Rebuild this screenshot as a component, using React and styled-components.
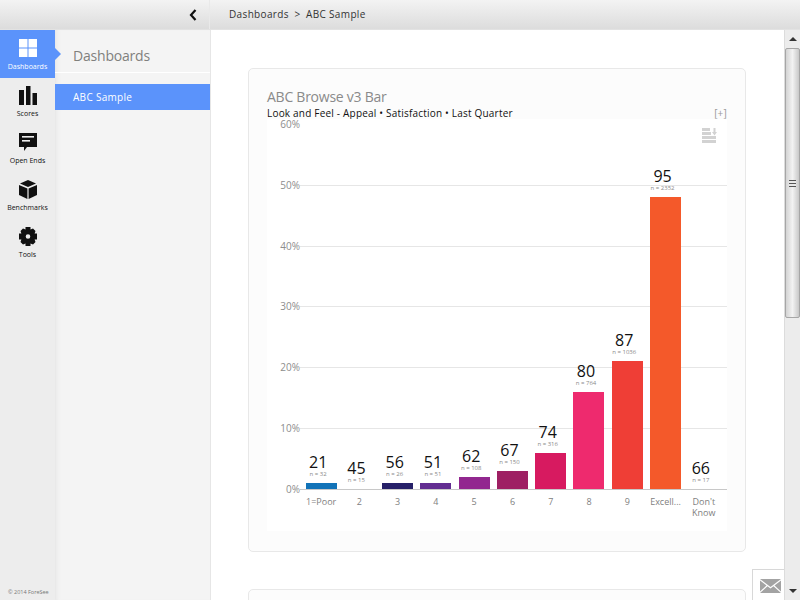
import React from 'react';
import styled, { createGlobalStyle } from 'styled-components';

const GlobalStyle = createGlobalStyle`
  html, body {
    margin: 0;
    padding: 0;
    height: 100%;
    overflow: hidden;
    background: #ffffff;
    font-family: "Open Sans", "Liberation Sans", sans-serif;
  }
  #root { height: 100%; }
`;

const Page = styled.div`
  width: 800px;
  height: 600px;
  display: flex;
  flex-direction: column;
  overflow: hidden;
`;

const TopBar = styled.header`
  height: 29px;
  flex: none;
  display: flex;
  background: linear-gradient(#f3f3f3, #dcdcdc);
  border-bottom: 1px solid #e2e2e2;
`;

const TopLeft = styled.div`
  width: 210px;
  display: flex;
  align-items: center;
  justify-content: flex-end;
  padding-right: 12px;
  box-sizing: border-box;
  border-right: 1px solid #e9e9e9;
`;

const Crumbs = styled.div`
  margin-left: 19px;
  font-size: 10px;
  letter-spacing: 0.35px;
  line-height: 29px;
  color: #333333;
`;

const CrumbSep = styled.span`
  margin: 0 5.5px;
`;

const Body = styled.div`
  flex: 1;
  display: flex;
  min-height: 0;
`;

const Rail = styled.nav`
  width: 55px;
  flex: none;
  display: flex;
  flex-direction: column;
  background: #ededed;
  position: relative;
`;

const RailItem = styled.div`
  height: ${({ $active }) => ($active ? 48 : 47)}px;
  display: flex;
  flex-direction: column;
  align-items: center;
  padding-top: ${({ $active }) => ($active ? 9 : 8)}px;
  box-sizing: border-box;
  position: relative;
  font-size: 7px;
  line-height: 10px;
  color: ${({ $active }) => ($active ? '#ffffff' : '#111111')};
  background: ${({ $active }) => ($active ? '#5b93fb' : 'transparent')};

  svg {
    display: block;
    margin-bottom: ${({ $active }) => ($active ? 5 : 4)}px;
  }

  ${({ $active }) => $active && `
    &::after {
      content: "";
      position: absolute;
      left: 55px;
      top: 18px;
      border-left: 6px solid #5b93fb;
      border-top: 6px solid transparent;
      border-bottom: 6px solid transparent;
    }
  `}
`;

const Copyright = styled.div`
  position: absolute;
  left: 8px;
  bottom: 4px;
  font-size: 5.5px;
  line-height: 8px;
  color: #777777;
`;

const Panel = styled.aside`
  width: 155px;
  flex: none;
  background: #f4f4f4;
  border-right: 1px solid #e6e6e6;
  box-shadow: inset 5px 0 5px -4px #e2e2e2;
`;

const PanelTitle = styled.div`
  height: 43px;
  box-sizing: border-box;
  padding-left: 18px;
  font-size: 14px;
  letter-spacing: -0.2px;
  line-height: 51px;
  color: #80807d;
  border-bottom: 1px solid #ffffff;
`;

const PanelLink = styled.div`
  margin-top: 11px;
  height: 26px;
  padding-left: 18px;
  font-size: 10px;
  letter-spacing: 0.3px;
  line-height: 27px;
  color: #ffffff;
  background: #5b93fb;
`;

const Main = styled.main`
  flex: 1;
  min-width: 0;
  display: flex;
  flex-direction: column;
  gap: 37px;
  padding: 38px 38px 0 37px;
  overflow: hidden;
  position: relative;
`;

const Card = styled.section`
  flex: none;
  height: ${({ $height }) => $height}px;
  box-sizing: border-box;
  padding: 19px 18px 0;
  background: #fcfcfc;
  border: 1px solid #e8e8e8;
  border-radius: 5px;
`;

const CardTitle = styled.h2`
  margin: 0;
  font-size: 14px;
  font-weight: 400;
  letter-spacing: -0.25px;
  line-height: 18px;
  color: #8a8a8a;
`;

const SubRow = styled.div`
  display: flex;
  justify-content: space-between;
  align-items: center;
  height: 13px;
  font-size: 10px;
  letter-spacing: 0.2px;
  color: #111111;
`;

const Expand = styled.span`
  font-size: 10px;
  color: #9a9a9a;
`;

const Chart = styled.div`
  height: 412px;
  background: #ffffff;
  position: relative;
  display: flex;
  flex-direction: column;
`;

const MenuIcon = styled.svg`
  position: absolute;
  top: 9px;
  right: 10px;
`;

const Plot = styled.div`
  margin: 5px 0 0 33px;
  padding: 0 4px 0 2px;
  height: 365px;
  position: relative;
  display: flex;
  align-items: flex-end;
  border-bottom: 1px solid #c8c8c8;
`;

const Grid = styled.div`
  position: absolute;
  inset: 0 0 -1px 0;
  display: flex;
  flex-direction: column;
  justify-content: space-between;
`;

const GridLine = styled.div`
  height: 1px;
  position: relative;
  background: ${({ $hidden }) => ($hidden ? 'transparent' : '#e6e6e6')};
`;

const TickLabel = styled.span`
  position: absolute;
  right: 100%;
  top: -6px;
  font-size: 10px;
  line-height: 12px;
  color: #8d8d8d;
`;

const Column = styled.div`
  flex: 1;
  min-width: 0;
  display: flex;
  flex-direction: column;
  align-items: center;
  position: relative;
`;

const Score = styled.div`
  padding-right: 6px;
  font-size: 16px;
  line-height: 17px;
  color: #111111;
`;

const Count = styled.div`
  padding-right: 6px;
  font-size: 6px;
  line-height: 7px;
  margin-bottom: 5px;
  white-space: nowrap;
  color: #8a8a8a;
`;

const Bar = styled.div`
  width: 31px;
  background: ${({ $color }) => $color};
`;

const Labels = styled.div`
  margin-left: 33px;
  padding: 6px 4px 0 2px;
  display: flex;
`;

const AxisLabel = styled.div`
  flex: 1;
  min-width: 0;
  text-align: center;
  font-size: 9px;
  line-height: 11px;
  color: #808080;
`;

const Scrollbar = styled.div`
  width: 16px;
  flex: none;
  display: flex;
  flex-direction: column;
  align-items: stretch;
  background: #ececec;
  border-left: 1px solid #dcdcdc;
  box-sizing: border-box;
`;

const ScrollArrow = styled.div`
  height: 18px;
  flex: none;
  display: flex;
  align-items: center;
  justify-content: center;
  ${({ $down }) => $down && 'margin-top: auto;'}

  &::before {
    content: "";
    border-left: 4px solid transparent;
    border-right: 4px solid transparent;
    ${({ $down }) => ($down ? 'border-top: 4px solid #333333;' : 'border-bottom: 4px solid #333333;')}
  }
`;

const ScrollThumb = styled.div`
  height: 270px;
  box-sizing: border-box;
  border: 1px solid #a6a6a6;
  border-radius: 2px;
  background: linear-gradient(to right, #d4d4d4, #f2f2f2 50%, #c8c8c8);
  display: flex;
  align-items: center;
  justify-content: center;
`;

const Grip = styled.div`
  width: 7px;
  height: 7px;
  background: repeating-linear-gradient(#555555 0 1px, #e8e8e8 1px 3px);
`;

const MailButton = styled.button`
  position: absolute;
  right: -4px;
  bottom: -2px;
  width: 36px;
  height: 33px;
  padding: 0;
  display: flex;
  align-items: center;
  justify-content: center;
  background: #ffffff;
  border: 1px solid #d8d8d8;
`;

const data = [
  { label: '1=Poor', score: 21, n: 32, pct: 1, color: '#1273b8' },
  { label: '2', score: 45, n: 15, pct: 0, color: '#1f2a6b' },
  { label: '3', score: 56, n: 26, pct: 1, color: '#262068' },
  { label: '4', score: 51, n: 51, pct: 1, color: '#622d91' },
  { label: '5', score: 62, n: 108, pct: 2, color: '#92278f' },
  { label: '6', score: 67, n: 150, pct: 3, color: '#9e1f63' },
  { label: '7', score: 74, n: 316, pct: 6, color: '#d71a60' },
  { label: '8', score: 80, n: 764, pct: 16, color: '#ee2a6e' },
  { label: '9', score: 87, n: 1036, pct: 21, color: '#ef3e36' },
  { label: 'Excell...', score: 95, n: 2352, pct: 48, color: '#f4592a' },
  { label: "Don't Know", score: 66, n: 17, pct: 0, color: '#f4592a' },
];

const ticks = [60, 50, 40, 30, 20, 10, 0];

function DashboardsIcon() {
  return (
    <svg width="18" height="18" viewBox="0 0 18 18" fill="#ffffff">
      <rect width="8.5" height="8.5" />
      <rect x="9.5" width="8.5" height="8.5" />
      <rect y="9.5" width="8.5" height="8.5" />
      <rect x="9.5" y="9.5" width="8.5" height="8.5" />
    </svg>
  );
}

function ScoresIcon() {
  return (
    <svg width="18" height="19" viewBox="0 0 18 19" fill="#111111">
      <rect y="4" width="5" height="15" />
      <rect x="7" width="4.5" height="19" />
      <rect x="13.5" y="7" width="4.5" height="12" />
    </svg>
  );
}

function OpenEndsIcon() {
  return (
    <svg width="18" height="19" viewBox="0 0 18 19">
      <path d="M0 0H18V14H8L5 18V14H0Z" fill="#111111" />
      <rect x="3" y="3" width="12" height="1.6" fill="#eeeeee" />
      <rect x="3" y="7" width="8" height="1.6" fill="#eeeeee" />
    </svg>
  );
}

function BenchmarksIcon() {
  return (
    <svg width="18" height="19" viewBox="0 0 18 19" fill="#111111">
      <path d="M9 0L17 3.5L9 7L1 3.5Z" />
      <path d="M0 5L8.4 8.6V19L0 15Z" />
      <path d="M18 5L9.6 8.6V19L18 15Z" />
    </svg>
  );
}

function ToolsIcon() {
  return (
    <svg width="18" height="19" viewBox="0 0 18 19" fill="#111111">
      <path
        fillRule="evenodd"
        d="M6.5 0H11.5V2.4L14 1.6L16.5 4L15.6 6.5H18V12.5H15.6L16.5 15L14 17.4L11.5 16.6V19H6.5V16.6L4 17.4L1.5 15L2.4 12.5H0V6.5H2.4L1.5 4L4 1.6L6.5 2.4ZM9 7.2A2.3 2.3 0 1 0 9 11.8A2.3 2.3 0 1 0 9 7.2Z"
      />
    </svg>
  );
}

const railItems = [
  { name: 'Dashboards', Icon: DashboardsIcon, active: true },
  { name: 'Scores', Icon: ScoresIcon },
  { name: 'Open Ends', Icon: OpenEndsIcon },
  { name: 'Benchmarks', Icon: BenchmarksIcon },
  { name: 'Tools', Icon: ToolsIcon },
];

export default function App() {
  return (
    <Page>
      <GlobalStyle />
      <TopBar>
        <TopLeft>
          <svg width="8" height="12" viewBox="0 0 8 12">
            <path d="M6.5 1L2 6L6.5 11" fill="none" stroke="#111111" strokeWidth="2.2" />
          </svg>
        </TopLeft>
        <Crumbs>
          Dashboards<CrumbSep>&gt;</CrumbSep>ABC Sample
        </Crumbs>
      </TopBar>
      <Body>
        <Rail>
          {railItems.map(({ name, Icon, active }) => (
            <RailItem key={name} $active={active}>
              <Icon />
              {name}
            </RailItem>
          ))}
          <Copyright>© 2014 ForeSee</Copyright>
        </Rail>
        <Panel>
          <PanelTitle>Dashboards</PanelTitle>
          <PanelLink>ABC Sample</PanelLink>
        </Panel>
        <Main>
          <Card $height={484}>
            <CardTitle>ABC Browse v3 Bar</CardTitle>
            <SubRow>
              <span>Look and Feel - Appeal • Satisfaction • Last Quarter</span>
              <Expand>[+]</Expand>
            </SubRow>
            <Chart>
              <MenuIcon width="15" height="15" viewBox="0 0 15 15" fill="#d2d2d2">
                <rect y="0" width="8" height="3" />
                <rect y="4" width="9" height="3" />
                <rect y="8" width="14" height="3" />
                <rect y="12" width="14" height="3" />
                <path d="M11.5 0H13.5V4H15L12.5 7.5L10 4H11.5Z" />
              </MenuIcon>
              <Plot>
                <Grid>
                  {ticks.map((t) => (
                    <GridLine key={t} $hidden={t === 60 || t === 0}>
                      <TickLabel>{t}%</TickLabel>
                    </GridLine>
                  ))}
                </Grid>
                {data.map((d) => (
                  <Column key={d.label}>
                    <Score>{d.score}</Score>
                    <Count>n = {d.n}</Count>
                    <Bar $color={d.color} style={{ height: d.pct * 6.08 }} />
                  </Column>
                ))}
              </Plot>
              <Labels>
                {data.map((d) => (
                  <AxisLabel key={d.label}>{d.label}</AxisLabel>
                ))}
              </Labels>
            </Chart>
          </Card>
          <Card $height={60} />
          <MailButton aria-label="Feedback">
            <svg width="21" height="14" viewBox="0 0 21 14" fill="#a3a3a3">
              <path d="M0 0H21L10.5 8Z" />
              <path d="M0 1.5L6.5 6.5L0 12.5Z" />
              <path d="M21 1.5L14.5 6.5L21 12.5Z" />
              <path d="M0 14L7.5 7.3L10.5 9.5L13.5 7.3L21 14Z" />
            </svg>
          </MailButton>
        </Main>
        <Scrollbar>
          <ScrollArrow />
          <ScrollThumb>
            <Grip />
          </ScrollThumb>
          <ScrollArrow $down />
        </Scrollbar>
      </Body>
    </Page>
  );
}
